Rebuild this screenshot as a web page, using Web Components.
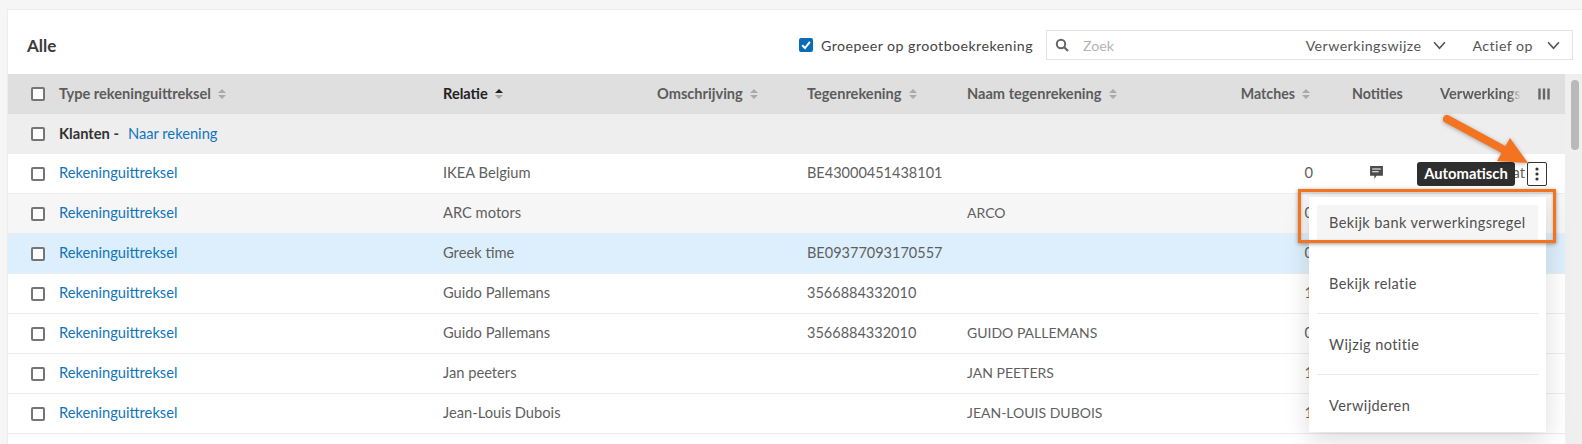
<!DOCTYPE html>
<html lang="nl">
<head>
<meta charset="utf-8">
<title>Bank verwerkingsregels</title>
<style>
  html, body { margin: 0; height: 444px; overflow: hidden; background: #f6f6f6; }
  body { padding: 9px 0 0 7px; box-sizing: border-box; font: 14px Lato, "Noto Sans", sans-serif; color: #555; }
</style>
</head>
<body>
<template id="check-tpl">
  <style>
    :host { display: inline-block; flex: none; width: 14px; height: 14px; box-sizing: border-box; border: 2px solid #757575; border-radius: 2px; background: #fff; }
    :host([checked]) { border-color: #0b6cb5; background: #0b6cb5; }
    svg { display: none; width: 10px; height: 10px; }
    :host([checked]) svg { display: block; }
  </style>
  <svg viewBox="0 0 10 10"><path d="M1.2 5.2 4 8 8.9 1.8" fill="none" stroke="#fff" stroke-width="2"/></svg>
</template>

<template id="sort-tpl">
  <style>
    :host { display: inline-block; width: 8px; height: 10px; margin-left: 7px; margin-top: 2px; }
    svg { display: block; width: 8px; height: 10px; }
    .up { fill: var(--up, #aaa); }
    .down { fill: #aaa; }
  </style>
  <svg viewBox="0 0 8 10"><path class="up" d="M4 0 8 4H0z"/><path class="down" d="M0 6h8l-4 4z"/></svg>
</template>

<fin-app>
  <fin-toolbar title-text="Alle"></fin-toolbar>
  <fin-table></fin-table>
</fin-app>

<script>
  const COLS = '51px 384px 214px 150px 160px 258px 88px 127px 90px 50px';

  class FinCheck extends HTMLElement {
    connectedCallback() {
      this.attachShadow({ mode: 'open' }).append(document.getElementById('check-tpl').content.cloneNode(true));
    }
  }
  customElements.define('fin-check', FinCheck);

  class FinSort extends HTMLElement {
    connectedCallback() {
      this.attachShadow({ mode: 'open' }).append(document.getElementById('sort-tpl').content.cloneNode(true));
    }
  }
  customElements.define('fin-sort', FinSort);

  class FinApp extends HTMLElement {
    connectedCallback() {
      this.attachShadow({ mode: 'open' }).innerHTML = `
        <style>
          :host { display: block; position: relative; width: 1575px; height: 435px; box-sizing: border-box; background: #fff; border: 1px solid #ececec; border-bottom: 0; border-right: 0; overflow: hidden; }
        </style>
        <slot></slot>
      `;
    }
  }
  customElements.define('fin-app', FinApp);

  class FinToolbar extends HTMLElement {
    connectedCallback() {
      const chevron = '<svg class="chev" viewBox="0 0 12 8"><path d="M1 1l5 5.5L11 1" fill="none" stroke="#555" stroke-width="1.5"/></svg>';
      this.attachShadow({ mode: 'open' }).innerHTML = `
        <style>
          :host { display: flex; align-items: center; height: 64px; box-sizing: border-box; padding: 6px 9px 0 19px; }
          h2 { margin: 0; flex: 1; font: 700 17px Lato, sans-serif; color: #3c3c3c; }
          label { display: flex; align-items: center; gap: 8px; margin-right: 13px; font-size: 14.2px; color: #444; letter-spacing: .45px; }
          .search { display: flex; align-items: center; width: 527px; height: 30px; box-sizing: border-box; border: 1px solid #e3e3e3; font-size: 14.2px; color: #555; }
          .search > svg { width: 14px; height: 14px; margin-left: 8px; }
          .zoek { flex: 1; margin-left: 14px; color: #b4b4b4; }
          .sel { display: flex; align-items: center; letter-spacing: .45px; }
          .chev { width: 13px; height: 9px; }
          .a { margin-right: 27px; gap: 11px; }
          .b { margin-right: 12px; gap: 14px; }
        </style>
        <h2>${this.getAttribute('title-text')}</h2>
        <label><fin-check checked></fin-check>Groepeer op grootboekrekening</label>
        <div class="search">
          <svg viewBox="0 0 14 14"><circle cx="6" cy="6" r="4.2" fill="none" stroke="#666" stroke-width="2"/><path d="M9 9l4 4" stroke="#666" stroke-width="2.2"/></svg>
          <span class="zoek">Zoek</span>
          <span class="sel a">Verwerkingswijze ${chevron}</span>
          <span class="sel b">Actief op ${chevron}</span>
        </div>
      `;
    }
  }
  customElements.define('fin-toolbar', FinToolbar);

  class FinTable extends HTMLElement {
    connectedCallback() {
      const rows = [
        ['IKEA Belgium', 'BE43000451438101', '', '0', 'note'],
        ['ARC motors', '', 'ARCO', '0', 'alt'],
        ['Greek time', 'BE09377093170557', '', '0', 'sel'],
        ['Guido Pallemans', '3566884332010', '', '1', ''],
        ['Guido Pallemans', '3566884332010', 'GUIDO PALLEMANS', '0', ''],
        ['Jan peeters', '', 'JAN PEETERS', '1', ''],
        ['Jean-Louis Dubois', '', 'JEAN-LOUIS DUBOIS', '1', ''],
      ];
      this.attachShadow({ mode: 'open' }).innerHTML = `
        <style>
          :host { display: grid; grid-template-columns: 1557px 1fr; position: relative; height: 370px; }
          .rows { min-width: 0; }
          .track { background: #efefef; padding: 6px 2px 0 6px; }
          .thumb { width: 8px; height: 70px; border-radius: 4px; background: #b9b9b9; }
        </style>
        <div class="rows">
          <fin-head></fin-head>
          <fin-group></fin-group>
          ${rows.map(r => `<fin-row relation="${r[0]}" iban="${r[1]}" name="${r[2]}" matches="${r[3]}" kind="${r[4]}"></fin-row>`).join('')}
        </div>
        <div class="track"><div class="thumb"></div></div>
        <fin-overlay></fin-overlay>
      `;
    }
  }
  customElements.define('fin-table', FinTable);

  class FinHead extends HTMLElement {
    connectedCallback() {
      this.attachShadow({ mode: 'open' }).innerHTML = `
        <style>
          :host { display: grid; grid-template-columns: ${COLS}; align-items: center; height: 40px; background: #dfdfdf; font-weight: 700; font-size: 14.6px; color: #5c5c5c; white-space: nowrap; }
          .box { padding-left: 23px; display: flex; }
          .act { color: #222; --up: #222; }
          .th, .end, .note, .clip { padding-bottom: 2px; }
          .end { justify-self: end; padding-right: 3px; display: flex; align-items: center; font-size: 14.2px; }
          .clip { overflow: hidden; width: 81px; -webkit-mask-image: linear-gradient(90deg, #000 85%, transparent); mask-image: linear-gradient(90deg, #000 85%, transparent); }
          .note { padding-left: 39px; font-size: 14.2px; }
          .th { display: flex; align-items: center; }
          .colbtn { display: flex; justify-content: flex-start; padding-left: 8px; }
          .colbtn svg { width: 12px; height: 12px; }
        </style>
        <div class="box"><fin-check></fin-check></div>
        <div class="th">Type rekeninguittreksel<fin-sort></fin-sort></div>
        <div class="th act">Relatie<fin-sort></fin-sort></div>
        <div class="th">Omschrijving<fin-sort></fin-sort></div>
        <div class="th">Tegenrekening<fin-sort></fin-sort></div>
        <div class="th">Naam tegenrekening<fin-sort></fin-sort></div>
        <div class="end">Matches<fin-sort></fin-sort></div>
        <div class="note">Notities</div>
        <div class="clip">Verwerkingswijze</div>
        <div class="colbtn"><svg viewBox="0 0 12 12"><path d="M1.5 .5v11M6 .5v11M10.5 .5v11" stroke="#666" stroke-width="2.4"/></svg></div>
      `;
    }
  }
  customElements.define('fin-head', FinHead);

  class FinGroup extends HTMLElement {
    connectedCallback() {
      this.attachShadow({ mode: 'open' }).innerHTML = `
        <style>
          :host { display: flex; align-items: center; height: 40px; padding-left: 23px; background: #eee; font-size: 14.7px; }
          b, span { padding-bottom: 2px; }
          b { margin-left: 14px; color: #333; }
          span { margin-left: 9px; color: #1275bb; }
        </style>
        <fin-check></fin-check><b>Klanten -</b><span>Naar rekening</span>
      `;
    }
  }
  customElements.define('fin-group', FinGroup);

  class FinRow extends HTMLElement {
    connectedCallback() {
      const a = n => this.getAttribute(n);
      const kind = a('kind');
      const note = kind === 'note'
        ? '<svg viewBox="0 0 14 14"><path d="M1 1h12v9H7l-2 3v-3H1z" fill="#4c4c4c"/><path d="M3 3.8h8M3 6.3h6" stroke="#fff"/></svg>'
        : '';
      this.attachShadow({ mode: 'open' }).innerHTML = `
        <style>
          :host { display: grid; grid-template-columns: ${COLS}; align-items: center; height: 40px; box-sizing: border-box; border-bottom: 1px solid #ececec; background: #fff; font-size: 14.7px; color: #5f5f5f; white-space: nowrap; }
          :host([kind="alt"]) { background: #f6f6f6; }
          :host([kind="sel"]) { background: #ddeffc; }
          .box { padding-left: 23px; display: flex; }
          a, .t { padding-bottom: 3px; }
          a { color: #1275bb; }
          .iban { font-size: 14.5px; padding-bottom: 2px; }
          .name { font-size: 14px; padding-bottom: 2px; }
          .num { justify-self: end; padding: 0 0 3px; }
          .note { padding-left: 56px; display: flex; }
          .note svg { width: 15px; height: 15px; margin-top: -2px; }
          .clip { overflow: hidden; width: 85px; box-sizing: border-box; padding: 0 0 3px 29px; }
        </style>
        <div class="box"><fin-check></fin-check></div>
        <a>Rekeninguittreksel</a>
        <div class="t">${a('relation')}</div>
        <div></div>
        <div class="t iban">${a('iban')}</div>
        <div class="t name">${a('name')}</div>
        <div class="num">${a('matches')}</div>
        <div class="note">${note}</div>
        <div class="clip">${kind === 'note' ? 'Automatisch' : ''}</div>
        <div></div>
      `;
    }
  }
  customElements.define('fin-row', FinRow);

  // tooltip, row menu and the orange callout lie over the table
  class FinOverlay extends HTMLElement {
    connectedCallback() {
      this.attachShadow({ mode: 'open' }).innerHTML = `
        <style>
          :host { position: absolute; left: 0; top: 0; width: 100%; height: 100%; pointer-events: none; }
          .kebab { position: absolute; left: 1519px; top: 88px; width: 20px; height: 24px; box-sizing: border-box; border: 1px solid #333; border-radius: 2px; background: #fff; display: flex; align-items: center; justify-content: center; }
          .kebab svg { width: 4px; height: 14px; }
          .tip { position: absolute; left: 1409px; top: 88px; width: 98px; height: 24px; border-radius: 3px; background: #2e2e2e; color: #fff; font-weight: 700; font-size: 14.8px; line-height: 23px; text-align: center; }
          .menu { position: absolute; left: 1301px; top: 123px; width: 237px; height: 235px; box-sizing: border-box; padding: 8px 8px 0; background: #fff; box-shadow: 0 8px 24px rgba(0,0,0,.14); font-size: 14.5px; color: #4f4f4f; letter-spacing: .42px; }
          .item { height: 61px; box-sizing: border-box; display: flex; align-items: center; padding: 0 12px; border-bottom: 1px solid #e9e9e9; }
          .item:last-child { border-bottom: 0; }
          .first { height: 35px; background: #f5f5f5; border: 0; margin-bottom: 13px; box-shadow: 0 13px 0 -12px #e9e9e9; }
          .mark { position: absolute; left: 1290px; top: 115px; width: 258px; height: 54px; box-sizing: border-box; border: 3px solid #f47321; box-shadow: 0 1px 4px rgba(40,40,40,.45), inset 0 1px 3px rgba(40,40,40,.3); }
          .arrow { position: absolute; left: 1430px; top: 35px; width: 100px; height: 60px; overflow: visible; filter: drop-shadow(0 1px 2px rgba(0,0,0,.3)); }
        </style>
        <div class="tip">Automatisch</div>
        <div class="kebab"><svg viewBox="0 0 4 14"><circle cx="2" cy="2" r="1.6" fill="#333"/><circle cx="2" cy="7" r="1.6" fill="#333"/><circle cx="2" cy="12" r="1.6" fill="#333"/></svg></div>
        <div class="menu">
          <div class="item first">Bekijk bank verwerkingsregel</div>
          <div class="item">Bekijk relatie</div>
          <div class="item">Wijzig notitie</div>
          <div class="item">Verwijderen</div>
        </div>
        <div class="mark"></div>
        <svg class="arrow" viewBox="0 0 100 60"><path d="M9 10 72 44" stroke="#f47321" stroke-width="8" stroke-linecap="round"/><path d="M90 54 72 29 59 52z" fill="#f47321"/></svg>
      `;
    }
  }
  customElements.define('fin-overlay', FinOverlay);
</script>
</body>
</html>
